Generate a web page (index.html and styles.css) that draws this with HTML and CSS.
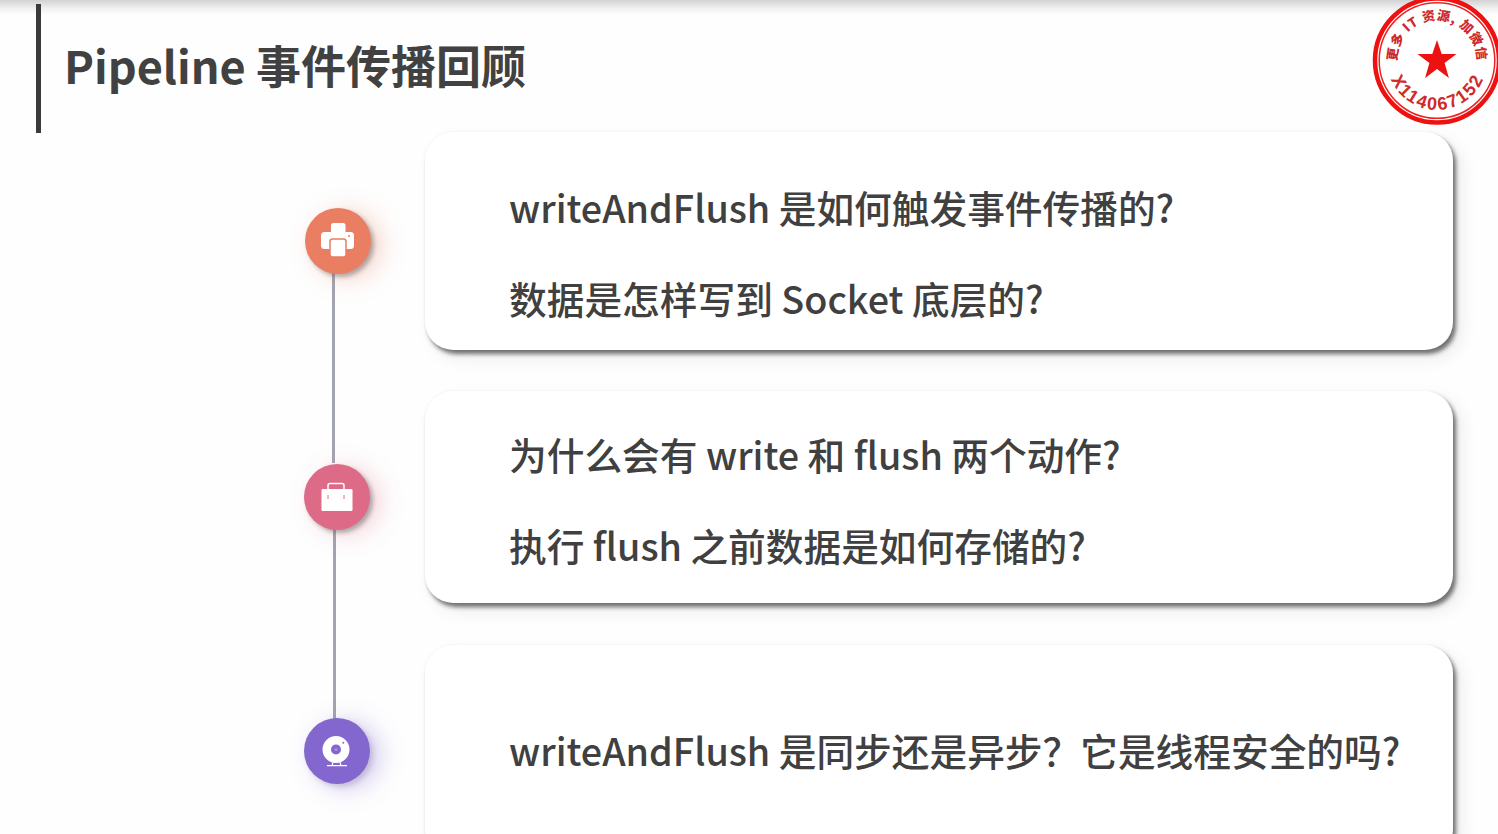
FILE: index.html
```html
<!DOCTYPE html>
<html lang="zh-CN">
<head>
<meta charset="utf-8">
<title>Pipeline 事件传播回顾</title>
<link rel="stylesheet" href="styles.css">
</head>
<body>
<div class="slide">
  <header class="header">
    <h1 class="title">Pipeline 事件传播回顾</h1>
  </header>

  <svg class="stamp" width="130" height="130" viewBox="0 0 130 130" aria-label="stamp">
    <defs>
      <path id="arc-top" d="M 27.400 78.700 A 40 40 0 1 1 102.600 78.700"/>
      <path id="arc-bottom" d="M 15 65 A 50 50 0 0 0 115 65"/>
    </defs>
    <circle class="stamp-outer" cx="65" cy="65.500" r="62"/>
    <circle class="stamp-inner" cx="65" cy="65.500" r="57.800"/>
    <polygon class="stamp-star" points="65,45 69.700,59 84.500,59 72.600,67.900 76.900,83 65,74 53.100,83 57.400,67.900 45.500,59 60.300,59"/>
    <text class="stamp-top"><textPath href="#arc-top" startOffset="50%" text-anchor="middle">更多 IT 资源, 加微信</textPath></text>
    <text class="stamp-bottom"><textPath href="#arc-bottom" startOffset="50.500%" text-anchor="middle">X114067152</textPath></text>
  </svg>

  <main class="content">
    <div class="timeline">
      <span class="link link-a"></span>
      <span class="link link-b"></span>
      <div class="node node-print">
        <svg class="icon-print" width="34" height="36" viewBox="0 0 34 36"><rect x="10" y="0" width="14.500" height="12" rx="2.500" fill="#fff"/><rect x="0" y="9" width="33" height="17" rx="3.500" fill="#fff"/><rect x="9" y="16" width="16" height="18" rx="2.500" fill="#fff" stroke="#e97e62" stroke-width="1.500"/><circle cx="28" cy="13" r="1" fill="#e97e62"/></svg>
      </div>
      <div class="node node-case">
        <svg width="34" height="32" viewBox="0 0 34 32"><path fill="none" stroke="#fff" stroke-width="1.500" d="M8 10V4.500a2 2 0 0 1 2-2h12a2 2 0 0 1 2 2V10"/><rect x="1.500" y="8" width="31" height="22" rx="1" fill="#fff"/><path fill="none" stroke="#dd6a86" stroke-width="1" d="M8 14v4M24 14v4"/></svg>
      </div>
      <div class="node node-cam">
        <svg width="34" height="34" viewBox="0 0 34 34"><path fill="#fff" fill-rule="evenodd" d="M16 2a13.500 13.500 0 1 1 0 27 13.500 13.500 0 0 1 0-27zm0 8.500a5 5 0 1 0 0 10 5 5 0 0 0 0-10z"/><circle cx="16" cy="15.500" r="1.500" fill="#a793de"/><circle cx="23.300" cy="8.700" r="1" fill="#8367cf"/><path fill="none" stroke="#fff" stroke-width="1.200" d="M7 31.700h20M13 28l-1 3.700M20 28l1 3.700"/></svg>
      </div>
    </div>
    <div class="cards">
      <section class="card card-first">
        <p class="line">writeAndFlush 是如何触发事件传播的?</p>
        <p class="line">数据是怎样写到 Socket 底层的?</p>
      </section>
      <section class="card card-second">
        <p class="line">为什么会有 write 和 flush 两个动作?</p>
        <p class="line">执行 flush 之前数据是如何存储的?</p>
      </section>
      <section class="card card-third">
        <p class="line">writeAndFlush 是同步还是异步&#xFF1F;它是线程安全的吗?</p>
      </section>
    </div>
  </main>
</div>
</body>
</html>
```

FILE: styles.css
```css
* { box-sizing: border-box; }

html, body {
  margin: 0;
  height: 100%;
  overflow: hidden;
}

body {
  background: #fefefe;
  color: #404040;
  font-family: "Noto Sans CJK SC", "Noto Sans", sans-serif;
}

.slide {
  position: relative;
  width: 1498px;
  height: 834px;
  overflow: hidden;
  padding-top: 4px;
  background: linear-gradient(#d2d2d2 0, #f0f0f0 8px, #fefefe 15px);
}

.header {
  height: 129px;
  margin-left: 36px;
  padding-left: 23px;
  border-left: 5px solid #3a3a3a;
  display: flex;
  align-items: center;
}

.title {
  margin: 0 0 9px;
  font-size: 45px;
  font-weight: 700;
  color: #414141;
  letter-spacing: 0;
}

.stamp {
  position: absolute;
  left: 1372px;
  top: -5px;
}

.stamp-outer { fill: #fff; stroke: #ee1111; stroke-width: 4.500px; }
.stamp-inner { fill: none; stroke: #ee2222; stroke-width: 1.500px; }
.stamp-star { fill: #ee1111; }
.stamp-top {
  fill: #cf2a2a;
  font-size: 13px;
  font-weight: 900;
  letter-spacing: 0.800px;
  font-family: "Noto Sans CJK SC", sans-serif;
}
.stamp-bottom {
  fill: #cf2a2a;
  font-size: 18px;
  font-weight: 700;
  letter-spacing: 1.800px;
  font-family: "Liberation Sans", sans-serif;
}

.content {
  display: flex;
  margin-top: -1px;
}

.timeline {
  position: relative;
  width: 425px;
  flex: none;
}

.link {
  position: absolute;
  width: 3px;
  background: #a2a4b0;
}
.link-a { left: 331.500px; top: 131px; height: 200px; }
.link-b { left: 333px; top: 391px; height: 200px; }

.node {
  position: absolute;
  width: 66px;
  height: 66px;
  border-radius: 50%;
  display: flex;
  align-items: center;
  justify-content: center;
}
.node-print {
  left: 305px; top: 76px;
  background: #e97e62;
  box-shadow: 3px 3px 4px rgba(90, 90, 90, .45), 10px 4px 24px rgba(233, 126, 98, .35);
}
.icon-print { margin-left: -1px; }
.node-case {
  left: 304px; top: 332px;
  background: #dd6a86;
  box-shadow: 3px 3px 4px rgba(90, 90, 90, .45), 10px 4px 24px rgba(221, 106, 134, .3);
}
.node-cam {
  left: 304px; top: 586px;
  background: #8367cf;
  box-shadow: 3px 3px 5px rgba(110, 100, 140, .25), 10px 4px 24px rgba(131, 103, 207, .35);
}

.cards {
  width: 1028px;
  display: flex;
  flex-direction: column;
  gap: 42px;
}

.card {
  height: 212px;
  padding-left: 84px;
  display: flex;
  flex-direction: column;
  justify-content: center;
  gap: 36px;
  background: #fff;
  border-radius: 28px;
  box-shadow: 3px 4px 4px rgba(60, 60, 60, .7), 8px 8px 18px rgba(0, 0, 0, .08), 0 0 3px rgba(0, 0, 0, .04);
}
.card-first { height: 218px; padding-top: 22px; }
.card-second { padding-top: 4px; margin-top: -1px; }
.card-third { padding-bottom: 4px; }

.line {
  margin: 0;
  font-size: 37.700px;
  font-weight: 500;
  line-height: 55px;
  white-space: nowrap;
  color: #404040;
}
```
